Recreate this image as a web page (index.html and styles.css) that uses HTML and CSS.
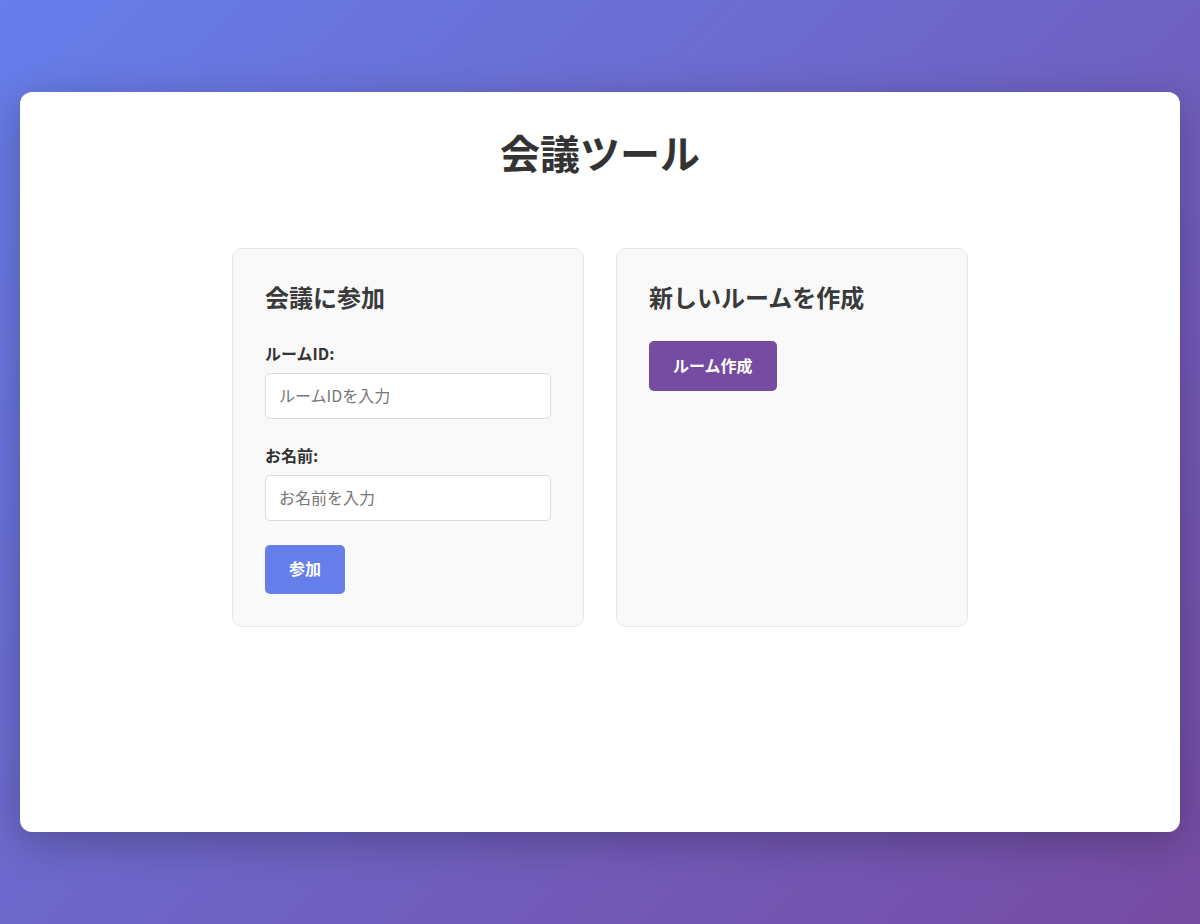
FILE: index.html
```html
<!DOCTYPE html>
<html lang="ja">
<head>
<meta charset="utf-8">
<title>会議ツール</title>
<link rel="stylesheet" href="styles.css">
</head>
<body>
<div class="app">
  <main class="card">
    <h1 class="title">会議ツール</h1>
    <div class="panels">
      <section class="panel">
        <h2 class="panel-title">会議に参加</h2>
        <div class="field">
          <label class="label" for="room">ルームID:</label>
          <input class="input" id="room" type="text" placeholder="ルームIDを入力">
        </div>
        <div class="field">
          <label class="label" for="name">お名前:</label>
          <input class="input" id="name" type="text" placeholder="お名前を入力">
        </div>
        <button class="btn btn-join">参加</button>
      </section>
      <section class="panel">
        <h2 class="panel-title">新しいルームを作成</h2>
        <button class="btn btn-create">ルーム作成</button>
      </section>
    </div>
  </main>
</div>
</body>
</html>
```
FILE: styles.css
```css
* { box-sizing: border-box; }
html, body { margin: 0; padding: 0; }
body {
  font-family: "Noto Sans CJK JP", "Noto Sans", sans-serif;
  background: linear-gradient(135deg, #667eea 0%, #764ba2 100%);
  min-height: 100vh;
  color: #333;
}
.app {
  min-height: 100vh;
  padding: 20px;
  display: flex;
  align-items: center;
}
.card {
  width: 100%;
  height: 740px;
  background: #fff;
  border-radius: 12px;
  box-shadow: 0 10px 40px rgba(0, 0, 0, 0.25);
  padding: 40px;
}
.title {
  margin: 0 0 74px;
  text-align: center;
  font-size: 40px;
  line-height: 40px;
  padding-bottom: 2px;
  font-weight: 700;
  color: #333;
}
.panels {
  display: grid;
  grid-template-columns: 352px 352px;
  gap: 32px;
  justify-content: center;
  align-items: stretch;
}
.panel {
  display: flex;
  flex-direction: column;
  align-items: flex-start;
  background: #f9f9f9;
  border: 1px solid #e6e6e6;
  border-radius: 10px;
  padding: 32px;
}
.panel-title {
  margin: 0 0 24px;
  font-size: 24px;
  line-height: 32px;
  padding-bottom: 4px;
  font-weight: 700;
  color: #3a3a3a;
}
.field {
  display: flex;
  flex-direction: column;
  align-self: stretch;
  margin-bottom: 24px;
}
.label {
  font-size: 16px;
  line-height: 24px;
  font-weight: 700;
  color: #333;
  margin-bottom: 8px;
}
.input {
  height: 46px;
  padding: 0 13px 2px;
  font-family: inherit;
  font-size: 16px;
  border: 1px solid #dcdcdc;
  border-radius: 5px;
  background: #fff;
  color: #333;
  outline: none;
}
.input::placeholder { color: #777; }
.btn {
  display: inline-block;
  border: 0;
  border-radius: 5px;
  color: #fff;
  font-family: inherit;
  font-size: 16px;
  font-weight: 700;
  padding: 0 24px 3px;
  cursor: pointer;
}
.btn-join {
  background: #667eea;
  height: 49px;
}
.btn-create {
  background: #764ba2;
  height: 50px;
}
```
